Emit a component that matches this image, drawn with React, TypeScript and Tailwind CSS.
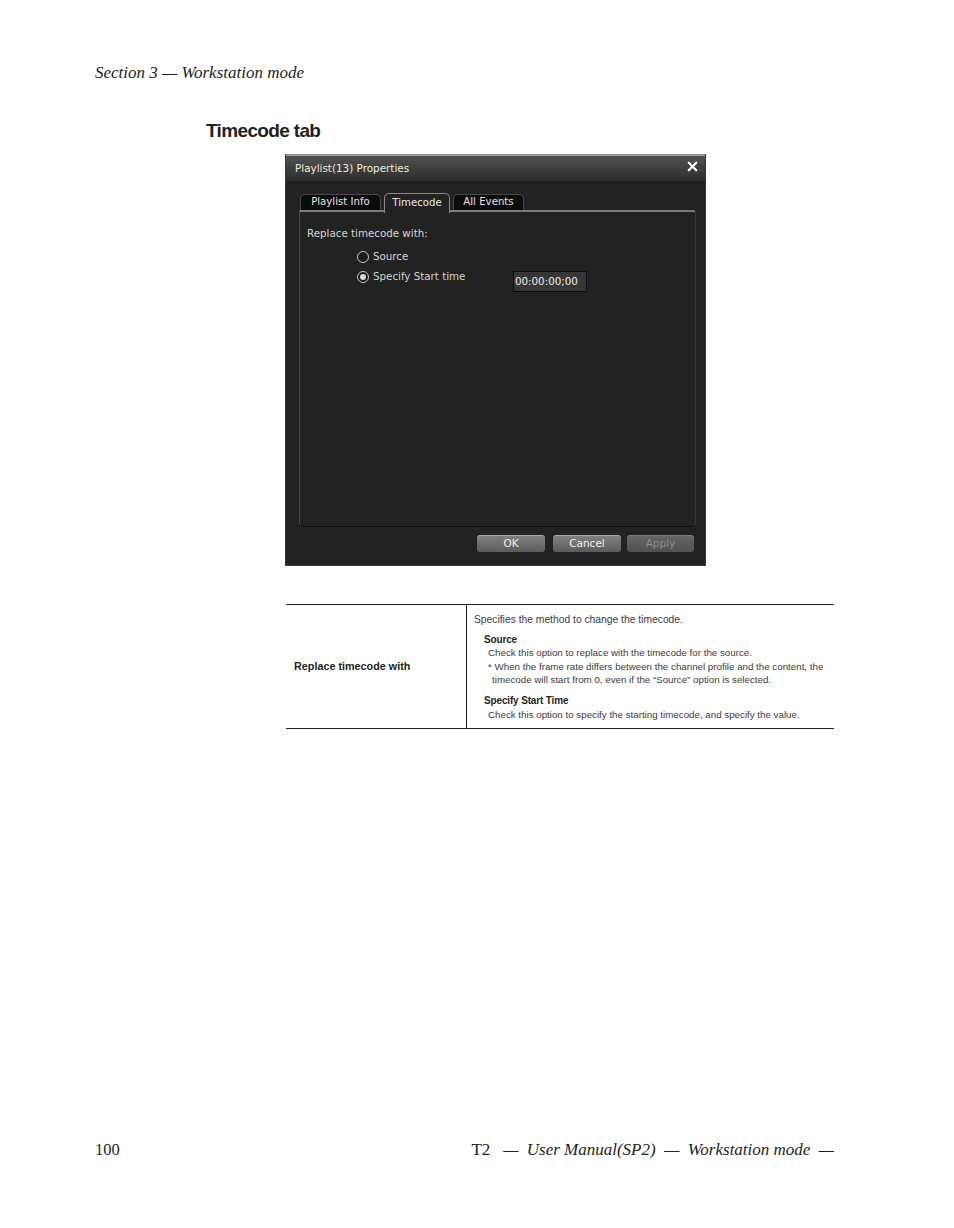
import { X } from 'lucide-react';

const serif = "font-['Liberation_Serif',serif] italic";

function Tab({ label, active, className }: { label: string; active?: boolean; className: string }) {
  return (
    <div
      className={`flex items-center justify-center rounded-t-[5px] border border-b-0 text-[10.2px] ${
        active
          ? 'relative z-10 -mb-[2px] h-[20px] border-[#8a8a8a] bg-[#222222] pb-[2px] text-[#e8e8e8]'
          : 'h-[17px] border-[#4a4a4a] bg-[#0c0c0c] pb-[2px] text-[#e0e0e0]'
      } ${className}`}
    >
      {label}
    </div>
  );
}

function Radio({ label, checked }: { label: string; checked?: boolean }) {
  return (
    <div className="flex items-center gap-[4px]">
      <span className="flex h-[12px] w-[12px] items-center justify-center rounded-full border border-[#c4c4c4] bg-[#1c1c1c]">
        {checked && <span className="h-[6px] w-[6px] rounded-full bg-[#d8d8d8]" />}
      </span>
      <span className="text-[10.3px] text-[#d2d2d2]">{label}</span>
    </div>
  );
}

function DialogButton({ label, disabled, className }: { label: string; disabled?: boolean; className: string }) {
  return (
    <div
      className={`flex h-[17px] items-center justify-center rounded-[3px] border-t text-[10.5px] ${
        disabled
          ? 'border-[#7a7a7a] bg-gradient-to-b from-[#666666] to-[#505050] text-[#8c8c8c]'
          : 'border-[#a8a8a8] bg-gradient-to-b from-[#808080] to-[#5c5c5c] text-[#f0f0f0]'
      } ${className}`}
    >
      {label}
    </div>
  );
}

export default function App() {
  return (
    <div className="flex min-h-[1228px] flex-col bg-white pl-[95px] pr-[120px] pt-[63px] text-[#231f20]">
      <div className={`${serif} text-[17px] leading-[20px]`}>Section 3 — Workstation mode</div>

      <h1 className="mt-[36px] ml-[111px] font-['Liberation_Sans',sans-serif] text-[19px] font-bold leading-[24px] tracking-[-0.65px]">
        Timecode tab
      </h1>

      {/* properties dialog */}
      <div className="mt-[11px] ml-[190px] flex h-[412px] w-[421px] flex-col border-x border-b border-[#3a3a3a] bg-[#222222] font-['DejaVu_Sans',sans-serif]">
        <div className="flex h-[27px] shrink-0 items-center justify-between border-t-2 border-[#9a9a9a] bg-gradient-to-b from-[#525252] to-[#2c2c2c] pl-[9px] pr-[5px]">
          <span className="mt-px text-[10.4px] text-[#f2efd8]">Playlist(13) Properties</span>
          <X size={15} strokeWidth={3.5} className="-mt-[4px] text-white" />
        </div>

        <div className="flex h-[383px] flex-col px-[13px] pt-[10px]">
          <div className="flex h-[20px] shrink-0 items-end gap-[3px] pl-px">
            <Tab label="Playlist Info" className="w-[81px]" />
            <Tab label="Timecode" active className="w-[66px]" />
            <Tab label="All Events" className="w-[71px]" />
          </div>

          <div className="-mt-px h-[317px] w-[397px] rounded-b-[5px] rounded-tr-[3px] border border-t-2 border-[#0e0e0e] border-t-[#7c7c7c] border-l-[#4a4a4a] border-r-[#3a3a3a] pl-[7px] pt-[13px]">
            <div className="text-[10.3px] leading-[16px] text-[#d6d6d6]">Replace timecode with:</div>
            <div className="ml-[50px] mt-[8px] flex flex-col">
              <Radio label="Source" />
              <div className="mt-[5px] flex items-start">
                <div className="w-[156px]">
                  <Radio label="Specify Start time" checked />
                </div>
                <div className="mt-[2px] flex h-[21px] w-[74px] items-center border border-[#0c0c0c] bg-[#363636] pl-px text-[10.3px] text-[#ececec]">
                  00:00:00;00
                </div>
              </div>
            </div>
          </div>

          <div className="-mr-[2px] mt-[8px] flex justify-end">
            <DialogButton label="OK" className="w-[68px]" />
            <DialogButton label="Cancel" className="ml-[8px] w-[68px]" />
            <DialogButton label="Apply" disabled className="ml-[6px] w-[67px]" />
          </div>
        </div>
      </div>

      {/* description table */}
      <div className="mt-[38px] ml-[191px] flex h-[125px] w-[548px] border-y border-[#231f20] font-['Liberation_Sans',sans-serif] text-[9.75px] leading-[13.5px]">
        <div className="flex w-[181px] shrink-0 items-center border-r border-[#231f20] pl-[8px] text-[10.8px] font-bold">
          Replace timecode with
        </div>
        <div className="pl-[7px] pt-[8px] text-[#3c3a3b]">
          <div className="text-[10.3px]">Specifies the method to change the timecode.</div>
          <div className="mt-[6px] pl-[10px]">
            <div className="text-[10px] font-bold tracking-[-0.15px] text-[#231f20]">Source</div>
            <div className="pl-[4px]">
              <div>Check this option to replace with the timecode for the source.</div>
              <div>* When the frame rate differs between the channel profile and the content, the</div>
              <div className="pl-[4px]">timecode will start from 0, even if the “Source” option is selected.</div>
            </div>
            <div className="mt-[7px] text-[10px] font-bold tracking-[-0.15px] text-[#231f20]">Specify Start Time</div>
            <div className="mt-px pl-[4px]">Check this option to specify the starting timecode, and specify the value.</div>
          </div>
        </div>
      </div>

      {/* page footer */}
      <div className={`mt-auto mb-[68px] flex items-baseline justify-between text-[17px] leading-[20px] ${serif}`}>
        <span className="text-[16.5px] not-italic">100</span>
        <span className="whitespace-pre">
          <span className="not-italic">T2</span>{'   —  User Manual(SP2)  —  Workstation mode  —'}
        </span>
      </div>
    </div>
  );
}
